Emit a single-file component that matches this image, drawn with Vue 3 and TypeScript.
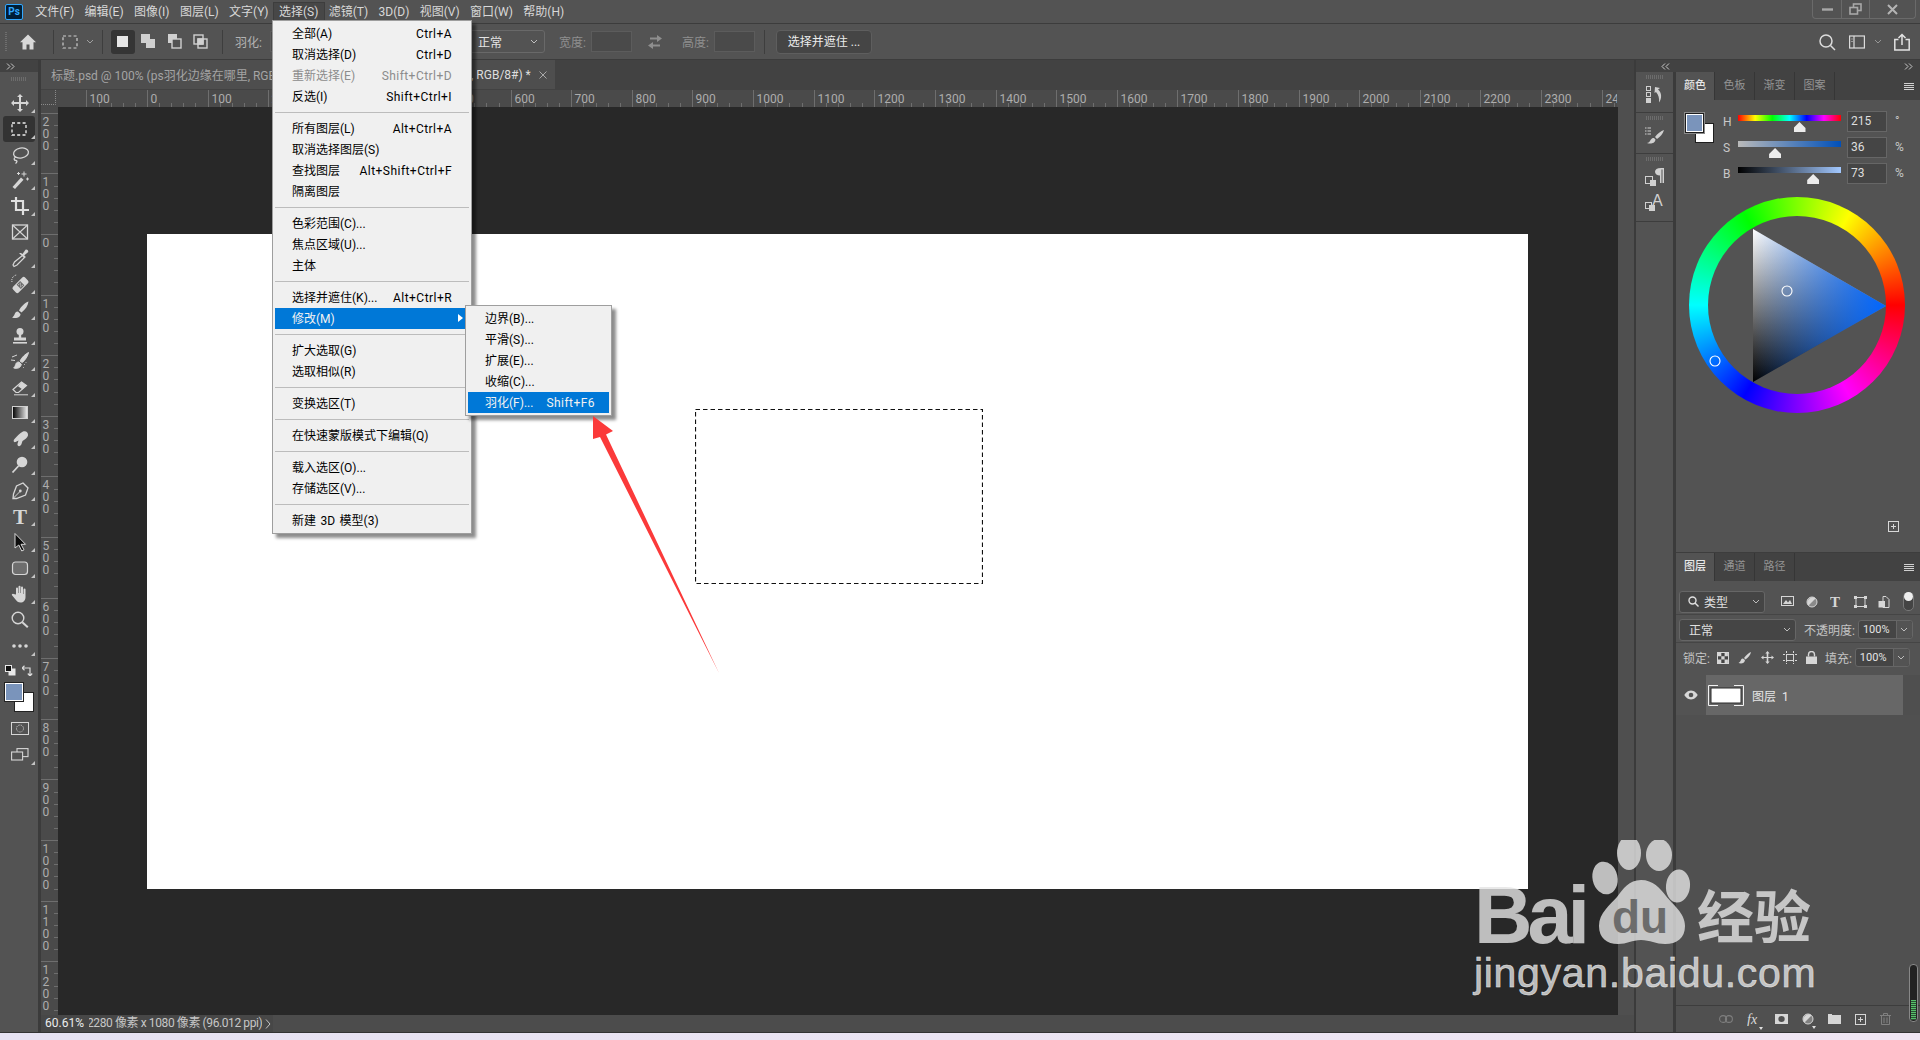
<template>
  <div class="ps">
    <header class="titlebar">
      <div class="logo">Ps</div>
      <nav class="menubar">
        <span
          v-for="item in menuBar"
          :key="item"
          class="menubar-item"
          :class="{ 'menubar-item--open': item === '选择(S)' }"
        >{{ item }}</span>
      </nav>
      <div class="window-controls">
        <span class="win-btn win-btn--min"><svg width="11" height="3"><rect width="11" height="2.4" y="0.3" fill="#a8a8a8" /></svg></span>
        <span class="win-btn win-btn--max">
          <svg width="13" height="12" fill="none" stroke="#a8a8a8" stroke-width="1.6"><rect x="4.5" y="1" width="7.5" height="6.5" /><rect x="1" y="4.5" width="7.5" height="6.5" fill="#535353" /></svg>
        </span>
        <span class="win-btn win-btn--close">
          <svg width="11" height="11" stroke="#b4b4b4" stroke-width="2"><path d="M1 1l9 9M10 1l-9 9" /></svg>
        </span>
      </div>
    </header>

    <section class="optionsbar">
      <span class="grip-v"></span>
      <svg class="o-home" width="18" height="18" viewBox="0 0 18 18"><path fill="#d8d8d8" d="M9 1.500L1 9.200h2.500V16.500h4v-5h3v5h4V9.200H17z" /></svg>
      <span class="o-sep o-sep--home"></span>
      <svg class="o-marquee" width="16" height="14"><rect x="1" y="1" width="14" height="12" fill="none" stroke="#cfcfcf" stroke-width="1.200" stroke-dasharray="3 2.300" /></svg>
      <svg class="o-chev" width="8" height="6"><path d="M1 1l3 3 3-3" fill="none" stroke="#a0a0a0" /></svg>
      <span class="o-sep o-sep--marquee"></span>
      <div class="mode-group">
        <span class="mode-btn mode-btn--on"><svg width="12" height="12"><rect width="11" height="11" fill="#e6e6e6" /></svg></span>
        <span class="mode-btn"><svg width="16" height="16"><rect width="9" height="9" fill="#d0d0d0" /><rect x="5" y="5" width="9" height="9" fill="#d0d0d0" /></svg></span>
        <span class="mode-btn"><svg width="16" height="16"><rect x="1" width="9" height="9" fill="#d0d0d0" /><rect x="5" y="5" width="9" height="9" fill="#535353" stroke="#d0d0d0" stroke-width="1.400" /></svg></span>
        <span class="mode-btn"><svg width="16" height="16" fill="none" stroke="#d0d0d0" stroke-width="1.400"><rect x="1" y="1" width="9" height="9" /><rect x="5" y="5" width="9" height="9" /><rect x="5" y="5" width="5" height="5" fill="#d0d0d0" /></svg></span>
      </div>
      <span class="o-sep o-sep--mode"></span>
      <span class="o-label o-label--feather">羽化:</span>
      <span class="o-input o-input--feather"></span>
      <span class="o-select">正常<svg width="8" height="6"><path d="M1 1l3 3 3-3" fill="none" stroke="#c0c0c0" /></svg></span>
      <span class="o-label o-label--width">宽度:</span>
      <span class="o-input o-input--size"></span>
      <svg class="o-swap" width="16" height="14" viewBox="0 0 16 14"><path fill="#8e8e8e" d="M10 0l5 3.500-5 3.500V4.500H3v-2h7zM6 7v2.500h7v2H6V14L1 10.500z" /></svg>
      <span class="o-label o-label--height">高度:</span>
      <span class="o-input o-input--size"></span>
      <span class="o-sep o-sep--size"></span>
      <span class="o-button">选择并遮住 ...</span>
      <div class="o-right">
        <svg width="18" height="18" viewBox="0 0 18 18" fill="none" stroke="#dcdcdc" stroke-width="1.500"><circle cx="8" cy="8" r="6" /><path d="M12.500 12.500l4.500 4.500" /></svg>
        <svg class="o-workspace" width="16" height="14" fill="none" stroke="#dcdcdc" stroke-width="1.200"><rect x="0.600" y="1" width="14.800" height="12" /><path d="M5 1v12" /><path d="M2.500 4h1M2.500 6.500h1" /></svg>
        <svg class="o-chev2" width="8" height="6"><path d="M1 1l3 3 3-3" fill="none" stroke="#969696" /></svg>
        <svg class="o-share" width="16" height="18" viewBox="0 0 16 18" fill="none" stroke="#e2e2e2" stroke-width="1.500"><path d="M4.500 6.500H.8v10.500h14.400V6.500h-3.700M8 12V1.500M4.500 5L8 1.500 11.500 5" /></svg>
      </div>
    </section>

    <div class="workspace">
      <aside class="toolbar">
        <div class="toolbar-head">
          <svg width="9" height="7" fill="none" stroke="#c8c8c8"><path d="M1 .5L4 3.500 1 6.500M5 .5L8 3.500 5 6.500" /></svg>
        </div>
        <div class="toolbar-grip"></div>
        <div
          v-for="tool in tools"
          :key="tool.name"
          class="tool"
          :class="{ 'tool--on': tool.on, 'tool--sub': tool.sub }"
          :title="tool.name"
        >
          <svg width="20" height="20" viewBox="0 0 20 20" v-html="tool.body"></svg>
        </div>
        <div class="color-reset">
          <svg width="11" height="11"><rect x="3.500" y="3.500" width="7" height="7" fill="#e8e8e8" /><rect x="0.500" y="0.500" width="6" height="6" fill="#111" stroke="#e8e8e8" /></svg>
          <svg width="11" height="11" viewBox="0 0 11 11" fill="none" stroke="#dcdcdc" stroke-width="1.200"><path d="M0 3h8v8M2.500 .8L0 3l2.500 2.200M5.800 8.500L8 11l2.200-2.500" /></svg>
        </div>
        <div class="color-swatches">
          <span class="swatch swatch--bg"></span>
          <span class="swatch swatch--fg"></span>
        </div>
        <div class="tool tool--mask">
          <svg width="18" height="14" fill="none" stroke="#d6d6d6"><rect x=".5" y=".5" width="17" height="12" /><circle cx="9" cy="6.500" r="3.500" stroke-dasharray="1.200 1.200" /></svg>
        </div>
        <div class="tool tool--sub tool--screen">
          <svg width="18" height="14" fill="none" stroke="#d6d6d6" stroke-width="1.100"><rect x="6" y=".6" width="11" height="8" /><rect x=".6" y="4" width="11" height="8" fill="#535353" /></svg>
        </div>
      </aside>

      <main class="doc">
        <div class="tabs">
          <div class="tab">
            <span class="tab-left">标题.psd @ 100% (ps羽化边缘在哪里, RGB/8#)</span>
            <span class="tab-right">, RGB/8#) *</span>
            <svg class="tab-close" width="8" height="8" stroke="#a8a8a8"><path d="M.5 .5l7 7M7.500 .5l-7 7" /></svg>
          </div>
        </div>
        <div class="ruler-row">
          <svg class="ruler-corner" width="17" height="17" stroke="#8a8a8a" stroke-dasharray="1 1"><path d="M0 14.500h14.500V0" fill="none" /></svg>
          <svg class="ruler-h" width="1559" height="17" viewBox="58 90 1559 17">
            <g v-for="t in hTicks" :key="t.x">
              <line :x1="t.x" :x2="t.x" :y1="t.major ? 90 : 103" y2="107" stroke="#6e6e6e" />
              <text v-if="t.major" :x="t.x + 3" y="103" class="ruler-text">{{ t.label }}</text>
            </g>
          </svg>
          <div class="scroll-corner"></div>
        </div>
        <div class="canvas-row">
          <svg class="ruler-v" width="17" height="908" viewBox="41 107 17 908">
            <g v-for="t in vTicks" :key="t.y">
              <line :x1="t.major ? 41 : 54" x2="58" :y1="t.y" :y2="t.y" stroke="#6e6e6e" />
              <template v-if="t.major">
                <text
                  v-for="(digit, i) in t.digits"
                  :key="i"
                  x="42.500"
                  :y="t.y + 12 + i * 12"
                  class="ruler-text"
                >{{ digit }}</text>
              </template>
            </g>
          </svg>
          <div class="canvas">
            <div class="page">
              <svg class="marquee" width="288" height="175" fill="none" stroke="#111" stroke-width="1.200" stroke-dasharray="4.500 3">
                <rect x=".5" y=".5" width="287" height="174" />
              </svg>
            </div>
          </div>
          <div class="scroll-v"></div>
        </div>
        <footer class="status">
          <span class="status-zoom">60.61%</span>
          <span class="status-info"><span class="status-clip"><span class="status-text">2280 像素 x 1080 像素 (96.012 ppi)</span></span><svg width="6" height="10" fill="none" stroke="#c4c4c4"><path d="M1 .5L5 5 1 9.500" /></svg></span>
        </footer>
      </main>

      <aside class="dock">
        <div class="dock-head">
          <svg width="9" height="7" fill="none" stroke="#c8c8c8"><path d="M4 .5L1 3.500 4 6.500M8 .5L5 3.500 8 6.500" /></svg>
          <svg class="dock-head-right" width="9" height="7" fill="none" stroke="#c8c8c8"><path d="M1 .5L4 3.500 1 6.500M5 .5L8 3.500 5 6.500" /></svg>
        </div>
        <div class="dock-body">
          <div class="dock-strip">
            <div class="strip-cell">
              <span class="strip-grip"></span>
              <svg width="20" height="20" viewBox="0 0 20 20"><g fill="none" stroke="#d0d0d0"><rect x="1.500" y="1.500" width="4" height="4" /><rect x="1.500" y="7.500" width="4" height="4" /></g><rect x="1" y="13" width="5" height="5" fill="#d0d0d0" /><path d="M10 2l5 1-2 1.500c4 3 4 9 1 13 .5-4-.5-8-3-10.500L9.500 8z" fill="#d0d0d0" /></svg>
            </div>
            <div class="strip-cell">
              <span class="strip-grip"></span>
              <svg width="22" height="20" viewBox="0 0 22 20"><path d="M1 2h6M1 5h6M1 8h6" stroke="#d0d0d0" stroke-dasharray="1.500 1 4" /><path d="M20 4c-3 1-7 4-9 7l2 2c3-2 6-5 7-9zM10 12c-3 0-3 2-4 3-.500 1-2 2-3 2 3 1 8 1 8.500-3.500z" fill="#d0d0d0" /></svg>
            </div>
            <div class="strip-cell strip-cell--para">
              <span class="strip-grip"></span>
              <svg width="20" height="24" viewBox="0 0 20 24"><rect x=".5" y="9.500" width="7" height="7" fill="none" stroke="#d0d0d0" /><rect x="5" y="13" width="6" height="6" fill="#d0d0d0" /><path d="M16 1h3v15h-1.500V2.500h-1V16H15V8.500c-3 0-5-1.500-5-3.700S12 1 16 1z" fill="#d0d0d0" /></svg>
              <svg class="strip-a" width="20" height="22" viewBox="0 0 20 22"><rect x=".5" y="11.500" width="6" height="6" fill="none" stroke="#d0d0d0" /><rect x="4" y="14" width="6" height="6" fill="#d0d0d0" /><text x="7" y="15" class="strip-a-text">A</text></svg>
            </div>
          </div>
          <div class="panels">
            <section class="panel panel--color">
              <div class="panel-tabs">
                <span
                  v-for="(name, i) in colorTabs"
                  :key="name"
                  class="panel-tab"
                  :class="{ 'panel-tab--on': i === 0 }"
                >{{ name }}</span>
                <span class="panel-menu"></span>
              </div>
              <div class="color-head">
                <div class="panel-swatches">
                  <span class="pswatch pswatch--bg"></span>
                  <span class="pswatch pswatch--fg"></span>
                </div>
                <div class="sliders">
                  <div v-for="s in sliders" :key="s.name" class="slider-row">
                    <span class="slider-name">{{ s.name }}</span>
                    <div class="slider-track" :class="s.cls">
                      <span class="slider-thumb" :style="{ left: s.pos + '%' }"></span>
                    </div>
                    <span class="slider-value">{{ s.value }}</span>
                    <span class="slider-unit">{{ s.unit }}</span>
                  </div>
                </div>
              </div>
              <div class="wheel">
                <svg class="wheel-tri" width="216" height="216" viewBox="1689 197 216 216">
                  <defs>
                    <linearGradient id="triV" x1="0" y1="0" x2="0" y2="1">
                      <stop offset="0" stop-color="#fff" />
                      <stop offset="1" stop-color="#000" />
                    </linearGradient>
                    <linearGradient id="triH" x1="0" y1="0" x2="1" y2="0">
                      <stop offset="0" stop-color="#0066ff" stop-opacity="0" />
                      <stop offset="1" stop-color="#0066ff" />
                    </linearGradient>
                  </defs>
                  <polygon points="1753,229 1886,306 1753,382" fill="url(#triV)" />
                  <polygon points="1753,229 1886,306 1753,382" fill="url(#triH)" />
                  <circle cx="1787" cy="291" r="5" fill="none" stroke="#fff" stroke-width="1.100" />
                  <circle cx="1715" cy="361" r="5" fill="none" stroke="#fff" stroke-width="1.100" />
                </svg>
              </div>
              <svg class="panel-add" width="11" height="11" fill="none" stroke="#d8d8d8"><rect x=".5" y=".5" width="10" height="10" /><path d="M3 5.500h5M5.500 3v5" /></svg>
            </section>

            <section class="panel panel--layers">
              <div class="panel-tabs">
                <span
                  v-for="(name, i) in layerTabs"
                  :key="name"
                  class="panel-tab"
                  :class="{ 'panel-tab--on': i === 0 }"
                >{{ name }}</span>
                <span class="panel-menu"></span>
              </div>
              <div class="layer-filter">
                <span class="field field--kind">
                  <svg width="11" height="11" fill="none" stroke="#e0e0e0" stroke-width="1.400"><circle cx="4.500" cy="4.500" r="3.500" /><path d="M7 7l3.500 3.500" /></svg>
                  类型
                  <svg class="field-chev" width="8" height="6"><path d="M1 1l3 3 3-3" fill="none" stroke="#bdbdbd" /></svg>
                </span>
                <svg class="lf-icon" width="14" height="12" fill="none" stroke="#d6d6d6"><rect x=".5" y=".5" width="12" height="9" /><path d="M2 8l3-4 2 2.500L9 4l2 4z" fill="#d6d6d6" stroke="none" /></svg>
                <svg class="lf-icon" width="13" height="12"><circle cx="6" cy="6" r="5" fill="#8a8a8a" stroke="#d6d6d6" /><path d="M2.500 9.500l7-7A5 5 0 002.500 9.500z" fill="#d6d6d6" /></svg>
                <svg class="lf-icon" width="13" height="12"><text x="0" y="11" class="lf-t">T</text></svg>
                <svg class="lf-icon" width="13" height="12" fill="#d6d6d6"><rect x="2" y="1.500" width="9" height="9" fill="none" stroke="#d6d6d6" /><rect x="0" y="0" width="3" height="3" /><rect x="10" y="0" width="3" height="3" /><rect x="0" y="9" width="3" height="3" /><rect x="10" y="9" width="3" height="3" /></svg>
                <svg class="lf-icon" width="12" height="12" fill="#d6d6d6"><path d="M5 .5h3l3 3v8H5z" fill="none" stroke="#d6d6d6" /><rect x="0.500" y="5" width="6.500" height="6.500" /></svg>
                <span class="lf-toggle"></span>
              </div>
              <div class="layer-blend">
                <span class="field field--blend">正常
                  <svg class="field-chev" width="8" height="6"><path d="M1 1l3 3 3-3" fill="none" stroke="#bdbdbd" /></svg>
                </span>
                <span class="lb-label lb-label--opacity">不透明度:</span>
                <span class="percent">100%<i><svg width="8" height="6"><path d="M1 1l3 3 3-3" fill="none" stroke="#bdbdbd" /></svg></i></span>
              </div>
              <div class="layer-lock">
                <span class="lb-label">锁定:</span>
                <svg class="lock-icon lock-icon--first" width="12" height="12"><rect x=".5" y=".5" width="11" height="11" fill="#444" stroke="#d6d6d6" /><path d="M1 1h3.300v3.300H1zM7.600 1h3.300v3.300H7.600zM4.300 4.300h3.300v3.300H4.300zM1 7.600h3.300v3.300H1zM7.600 7.600h3.300v3.300H7.600z" fill="#d6d6d6" /></svg>
                <svg class="lock-icon" width="14" height="14" viewBox="0 0 14 14"><path fill="#d6d6d6" d="M13 1c-2 .7-5 3-7 6l1.500 1.500C10 7 12.500 4 13 1zM5 7.500C3 7.500 3 9 2.500 10c-.3.8-1 1.500-2 2 2.500 1 6 .7 6.500-3z" /></svg>
                <svg class="lock-icon" width="13" height="13" viewBox="0 0 13 13"><path fill="#d6d6d6" d="M6.500 0l2.200 2.500H7.300V6h3.200V4.500L13 6.500l-2.500 2V7H7.300v3.500h1.400L6.500 13l-2.200-2.500h1.400V7H2.500v1.500L0 6.500l2.500-2V6h3.200V2.500H4.300z" /></svg>
                <svg class="lock-icon" width="14" height="13" fill="none" stroke="#d6d6d6"><path d="M3.500 0v13M10.500 0v13M0 3.500h14M0 9.500h14" stroke-dasharray="2 1" /><path d="M3.500 3.500h7v6h-7z" stroke-dasharray="none" /></svg>
                <svg class="lock-icon" width="11" height="13" viewBox="0 0 11 13"><rect y="5.500" width="11" height="7.500" fill="#d6d6d6" /><path d="M2.500 5.500V3.500a3 3 0 016 0v2" fill="none" stroke="#d6d6d6" stroke-width="1.400" /></svg>
                <span class="lb-label lb-label--fill">填充:</span>
                <span class="percent">100%<i><svg width="8" height="6"><path d="M1 1l3 3 3-3" fill="none" stroke="#bdbdbd" /></svg></i></span>
              </div>
              <div class="layer-row">
                <span class="layer-eye">
                  <svg width="14" height="10" viewBox="0 0 14 10"><path d="M7 .5C3.500 .5 1 3.500 .3 5 1 6.500 3.500 9.500 7 9.500S13 6.500 13.700 5C13 3.500 10.500 .5 7 .5z" fill="#d8d8d8" /><circle cx="7" cy="5" r="2.300" fill="#535353" /></svg>
                </span>
                <div class="layer-item">
                  <svg class="layer-thumb" width="36" height="21" viewBox="0 0 36 21">
                    <rect x="3" y="3" width="30" height="15" fill="#fff" stroke="#2a2a2a" />
                    <path d="M10 .5H.5v20H10M26 .5h9.500v20H26" fill="none" stroke="#f2f2f2" />
                  </svg>
                  <span class="layer-name">图层 1</span>
                </div>
                <span class="layer-gutter"></span>
              </div>
              <div class="layer-rest"></div>
              <div class="layer-foot">
                <svg width="14" height="8" fill="none" stroke="#7e7e7e" stroke-width="1.100"><rect x=".6" y=".6" width="7" height="6.800" rx="3.400" /><rect x="6.400" y=".6" width="7" height="6.800" rx="3.400" /></svg>
                <span class="foot-tri"><svg width="14" height="14"><text x="0" y="12" class="foot-fx">fx</text></svg></span>
                <svg width="13" height="10"><rect width="13" height="10" fill="#d6d6d6" /><ellipse cx="6.500" cy="5" rx="3.200" ry="3" fill="#505050" /></svg>
                <span class="foot-tri"><svg width="12" height="12"><circle cx="6" cy="6" r="5" fill="#808080" stroke="#d6d6d6" /><path d="M2.500 9.500l7-7A5 5 0 002.500 9.500z" fill="#d6d6d6" /></svg></span>
                <svg width="13" height="10"><path d="M0 0h4v1h9v9H0z" fill="#d6d6d6" /></svg>
                <svg width="11" height="11" fill="none" stroke="#d6d6d6"><rect x=".5" y=".5" width="10" height="10" /><path d="M3 5.500h5M5.500 3v5" /></svg>
                <svg width="11" height="12" fill="none" stroke="#808080"><path d="M0 2.500h11M3.500 2V.5h4V2M1.500 3v8.500h8V3M4 4.500v5.500M7 4.500v5.500" /></svg>
              </div>
              <div class="gauge"><span class="gauge-level"></span></div>
            </section>
          </div>
        </div>
      </aside>
    </div>

    <div class="bottom-strip"></div>

    <!-- dropdown open on top of everything -->
    <div class="menu menu--select">
      <template v-for="(group, g) in selectMenu" :key="g">
        <div v-if="g > 0" class="menu-sep"></div>
        <div
          v-for="row in group"
          :key="row.label"
          class="menu-row"
          :class="{ 'menu-row--off': row.off, 'menu-row--on': row.on }"
        >
          <span>{{ row.label }}</span>
          <span class="menu-shortcut">{{ row.keys }}</span>
        </div>
      </template>
      <span class="menu-caret"></span>
    </div>
    <div class="menu menu--modify">
      <div
        v-for="row in modifyMenu"
        :key="row.label"
        class="menu-row"
        :class="{ 'menu-row--on': row.on }"
      >
        <span>{{ row.label }}</span>
        <span class="menu-keys menu-shortcut">{{ row.keys }}</span>
      </div>
    </div>

    <svg class="arrow" width="134" height="264" viewBox="590 412 134 264">
      <polygon points="593,416 613,431 606,434.500 719,673 600,437 593,439" fill="#fb3a3a" />
    </svg>

    <svg class="watermark" width="370" height="170" viewBox="1460 840 370 170">
      <g fill="#e4e4e4" fill-opacity="0.8">
        <text x="1474" y="943" class="wm-bai">Bai</text>
        <ellipse cx="1629" cy="853" rx="12" ry="17" />
        <ellipse cx="1659" cy="855" rx="13" ry="16" />
        <ellipse cx="1605" cy="878" rx="12.500" ry="16.500" transform="rotate(-12 1605 878)" />
        <ellipse cx="1678" cy="886" rx="12" ry="16.500" transform="rotate(6 1678 886)" />
        <path d="M1641 880c-12 0-18 9-24 17-7 8-18 16-18 29 0 12 8 18 19 18 9 0 14-4 23-4s15 4 24 4c12 0 20-6 20-18 0-13-12-21-19-30-6-8-13-16-25-16z" />
        <text x="1697" y="938" class="wm-cjk">经验</text>
        <text x="1474" y="987" class="wm-url">jingyan.baidu.com</text>
      </g>
      <text x="1612" y="933" class="wm-du">du</text>
    </svg>
  </div>
</template>

<script setup lang="ts">
interface Tool {
  name: string
  body: string
  sub?: boolean
  on?: boolean
}

interface MenuRow {
  label: string
  keys?: string
  off?: boolean
  on?: boolean
}

const C = '#d6d6d6'

const menuBar = [
  '文件(F)', '编辑(E)', '图像(I)', '图层(L)', '文字(Y)', '选择(S)',
  '滤镜(T)', '3D(D)', '视图(V)', '窗口(W)', '帮助(H)',
]

// icons are plain markup since there are so many of them
const tools: Tool[] = [
  { name: 'move', sub: true, body: `<path fill="${C}" d="M10 1l3 3h-2v5h5V7l3 3-3 3v-2h-5v5h2l-3 3-3-3h2v-5H4v2l-3-3 3-3v2h5V4H7z"/>` },
  { name: 'marquee', sub: true, on: true, body: `<rect x="3" y="4" width="14" height="12" fill="none" stroke="#eee" stroke-width="1.300" stroke-dasharray="3 2.300"/>` },
  { name: 'lasso', sub: true, body: `<ellipse cx="11" cy="8" rx="7.500" ry="5" fill="none" stroke="${C}" stroke-width="1.300" transform="rotate(-10 11 8)"/><path d="M6 12c-3 1-2 3.500 0 3.500 1.500 0 1 2-.5 3" fill="none" stroke="${C}" stroke-width="1.300"/>` },
  { name: 'wand', sub: true, body: `<path d="M2.500 17l8.500-9.500 2.500 2.200L5 19z" fill="${C}"/><path d="M14 1.500v5M11.500 4h5M8.500 2v3M7 3.500h3M17.500 7.500v3M16 9h3" stroke="${C}"/>` },
  { name: 'crop', sub: true, body: `<path d="M6 1v13h13M1 5h12v14" fill="none" stroke="#e0e0e0" stroke-width="2.200"/>` },
  { name: 'frame', body: `<rect x="2.500" y="3" width="15" height="14" fill="none" stroke="${C}" stroke-width="1.300"/><path d="M2.500 3l15 14M17.500 3l-15 14" stroke="${C}" stroke-width="1.100"/>` },
  { name: 'eyedropper', sub: true, body: `<path d="M13 7l2 2-8 8-3 1.500L3 17l1.500-3z" fill="none" stroke="${C}" stroke-width="1.200"/><path d="M11 5l1.500 1 3-4.200c1.300-1 3.500 1 2.500 2.500L14 7.500l1 1.500-1 1-5-5z" fill="${C}"/>` },
  { name: 'heal', sub: true, body: `<g transform="rotate(-45 10.500 11)"><rect x="2" y="7" width="17" height="8" rx="2" fill="${C}"/><rect x="8" y="8" width="5" height="6" fill="#6a6a6a"/><path d="M9 9h1v1H9zM11 9h1v1h-1zM10 10.500h1v1h-1zM9 12h1v1H9zM11 12h1v1h-1z" fill="${C}"/></g><path d="M2 8c-1-4 2-7 5-7" fill="none" stroke="${C}" stroke-dasharray="1 1"/>` },
  { name: 'brush', sub: true, body: `<path d="M18.500 1.500c-3.500 1-7.500 5-9.500 9l2.500 2c4-3 6.500-7 7-11zM8 11.500c-2.500 0-3 1.500-3.500 3-.3 1-1.300 2.300-2.500 3 3.500 1.300 8.500.5 8.500-3.500z" fill="${C}"/>` },
  { name: 'stamp', sub: true, body: `<circle cx="10" cy="5.500" r="3.500" fill="${C}"/><path d="M8.800 8h2.400v3.500H16V14.500H4V11.500h4.800z" fill="${C}"/><rect x="3" y="16" width="14" height="1.600" fill="${C}"/>` },
  { name: 'mixer', sub: true, body: `<path d="M18.500 1.500c-3 1.500-6.500 4.500-8.500 8.500l2.300 1.500c3-2.500 5.500-6.500 6.200-10zM9 11c-2.300 0-3 1.300-3.300 2.500-.3 1.300-1 2.500-2 3.500 3 .8 7.500.3 7.500-4zM2 6l5-2M1 9l4 .5" fill="${C}" stroke="${C}"/><path d="M14 13l1 1M15.500 11l1 1M13 16l1 1" stroke="${C}" stroke-dasharray="1 1"/>` },
  { name: 'eraser', sub: true, body: `<path d="M3 12.500L11.500 5l5 3.500-8 7H6z" fill="none" stroke="${C}" stroke-width="1.200"/><path d="M8 9.300L11.500 5l5 3.500-4 4z" fill="${C}"/><path d="M4 17.800h14" stroke="${C}"/>` },
  { name: 'gradient', sub: true, body: `<defs><linearGradient id="toolGrad"><stop offset="0" stop-color="#000"/><stop offset="1" stop-color="#eee"/></linearGradient></defs><rect x="2.500" y="3.500" width="15" height="12" fill="url(#toolGrad)" stroke="#d0d0d0"/>` },
  { name: 'smudge', sub: true, body: `<path d="M13 2.500c3-1 5.500 1 5 4-.5 2-3 4-5.500 5.500l-1 3c-1 3-4.500 2.800-4-.2l1-3.300-3 1.500c-2 .7-2.500-1.500-1-3 3-3 5-6 8.500-7.500z" fill="${C}"/>` },
  { name: 'dodge', sub: true, body: `<circle cx="12" cy="7" r="5.300" fill="${C}"/><path d="M8.500 11L2.500 17.500" stroke="${C}" stroke-width="1.800"/>` },
  { name: 'pen', sub: true, body: `<path d="M13 2l5 5-2.500 7-9 3.500H3L3.500 13 6.500 5z" fill="none" stroke="${C}" stroke-width="1.300"/><path d="M3.500 17l6-6" stroke="${C}"/><circle cx="10.300" cy="10" r="1.400" fill="${C}"/>` },
  { name: 'type', sub: true, body: `<text x="3" y="17.500" font-family="Liberation Serif" font-weight="700" font-size="21" fill="${C}">T</text>` },
  { name: 'path select', sub: true, body: `<path d="M5 1.500v14.500l3.800-3 3 6 2.200-1.200-3-5.500h4.500z" fill="#0c0c0c" stroke="#d8d8d8"/>` },
  { name: 'shape', sub: true, body: `<rect x="2.500" y="4" width="15" height="12.500" rx="3" fill="#6e6e6e" stroke="${C}" stroke-width="1.200"/>` },
  { name: 'hand', sub: true, body: `<path fill="${C}" d="M6 10.500V4.500a1 1 0 012 0V9h.5V2.800a1 1 0 012 0V9h.5V3.500a1 1 0 012 0V10h.5V5.500a1 1 0 012 0V13c0 3.500-2 5.500-5 5.500-2.500 0-3.500-1-5-3L2 11.300c-.6-1 .6-2.200 1.500-1.400z"/>` },
  { name: 'zoom', body: `<circle cx="8" cy="8" r="5.800" fill="none" stroke="${C}" stroke-width="1.400"/><path d="M12.300 12.300l5.500 5" stroke="${C}" stroke-width="2"/>` },
  { name: 'more', sub: true, body: `<circle cx="4" cy="10" r="1.800" fill="${C}"/><circle cx="10" cy="10" r="1.800" fill="${C}"/><circle cx="16" cy="10" r="1.800" fill="${C}"/>` },
]

const selectMenu: MenuRow[][] = [
  [
    { label: '全部(A)', keys: 'Ctrl+A' },
    { label: '取消选择(D)', keys: 'Ctrl+D' },
    { label: '重新选择(E)', keys: 'Shift+Ctrl+D', off: true },
    { label: '反选(I)', keys: 'Shift+Ctrl+I' },
  ],
  [
    { label: '所有图层(L)', keys: 'Alt+Ctrl+A' },
    { label: '取消选择图层(S)' },
    { label: '查找图层', keys: 'Alt+Shift+Ctrl+F' },
    { label: '隔离图层' },
  ],
  [
    { label: '色彩范围(C)...' },
    { label: '焦点区域(U)...' },
    { label: '主体' },
  ],
  [
    { label: '选择并遮住(K)...', keys: 'Alt+Ctrl+R' },
    { label: '修改(M)', on: true },
  ],
  [
    { label: '扩大选取(G)' },
    { label: '选取相似(R)' },
  ],
  [{ label: '变换选区(T)' }],
  [{ label: '在快速蒙版模式下编辑(Q)' }],
  [
    { label: '载入选区(O)...' },
    { label: '存储选区(V)...' },
  ],
  [{ label: '新建 3D 模型(3)' }],
]

const modifyMenu: MenuRow[] = [
  { label: '边界(B)...' },
  { label: '平滑(S)...' },
  { label: '扩展(E)...' },
  { label: '收缩(C)...' },
  { label: '羽化(F)...', keys: 'Shift+F6', on: true },
]

const colorTabs = ['颜色', '色板', '渐变', '图案']
const layerTabs = ['图层', '通道', '路径']

const sliders = [
  { name: 'H', cls: 'track-h', value: '215', unit: '°', pos: (215 / 360) * 100 },
  { name: 'S', cls: 'track-s', value: '36', unit: '%', pos: 36 },
  { name: 'B', cls: 'track-b', value: '73', unit: '%', pos: 73 },
]

// 60.61% zoom: document pixel 0 sits at x=147 / y=234
const PX_PER_UNIT = 0.6061
const ORIGIN_X = 147
const ORIGIN_Y = 234

const hTicks: { x: number; major: boolean; label: string }[] = []
for (let v = -100; v <= 2500; v += 20) {
  const major = v % 100 === 0
  hTicks.push({
    x: Math.round(ORIGIN_X + v * PX_PER_UNIT) + 0.5,
    major,
    label: String(Math.abs(v)),
  })
}

const vTicks: { y: number; major: boolean; digits: string[] }[] = []
for (let v = -200; v <= 1300; v += 20) {
  const major = v % 100 === 0
  vTicks.push({
    y: Math.round(ORIGIN_Y + v * PX_PER_UNIT) + 0.5,
    major,
    digits: String(Math.abs(v)).split(''),
  })
}
</script>

<style scoped>
.ps {
  position: relative;
  display: flex;
  flex-direction: column;
  width: 1920px;
  height: 1040px;
  overflow: hidden;
  background: #535353;
  color: #d8d8d8;
  font-family: Roboto, "Noto Sans CJK SC", sans-serif;
  font-size: 12px;
}

/* title bar */
.titlebar {
  display: flex;
  align-items: flex-start;
  flex: none;
  box-sizing: border-box;
  height: 24px;
  border-bottom: 1px solid #3c3c3c;
  background: #535353;
}

.logo {
  width: 16px;
  height: 14px;
  margin: 4px 0 0 5px;
  border: 1px solid #31a8ff;
  border-radius: 2px;
  background: #001e36;
  color: #31a8ff;
  font-size: 10px;
  font-weight: 700;
  line-height: 14px;
  text-align: center;
}

.menubar {
  display: flex;
  margin-left: 7px;
}

.menubar-item {
  height: 21px;
  margin-top: 3px;
  padding: 0 5.200px;
  line-height: 18px;
  white-space: nowrap;
}

.menubar-item--open {
  background: #474747;
  outline: 1px solid #3d3d3d;
}

.window-controls {
  display: flex;
  width: 102px;
  height: 18px;
  margin-left: auto;
  margin-right: 4px;
  border: 1px solid #6a6a6a;
  border-top: 0;
  border-radius: 0 0 4px 4px;
}

.win-btn {
  display: flex;
  align-items: center;
  justify-content: center;
  height: 100%;
  border-right: 1px solid #6a6a6a;
}

.win-btn--min { width: 28px; }
.win-btn--max { width: 27px; }
.win-btn--close { flex: 1; border-right: 0; }

/* options bar */
.optionsbar {
  display: flex;
  align-items: center;
  flex: none;
  box-sizing: border-box;
  height: 36px;
  border-bottom: 1px solid #3c3c3c;
  background: #535353;
}

.grip-v {
  width: 2px;
  height: 20px;
  margin-left: 5px;
  background: repeating-linear-gradient(#6e6e6e 0 1px, transparent 1px 2px);
}

.o-home { margin-left: 12px; }
.o-marquee { margin-left: 8px; }
.o-chev { margin-left: 8px; }

.o-sep {
  width: 1px;
  height: 24px;
  background: #3e3e3e;
}

.o-sep--home { margin-left: 16px; }
.o-sep--marquee { margin-left: 8px; }
.o-sep--mode { margin-left: 9px; }
.o-sep--size { margin-left: 9px; }

.mode-group {
  display: flex;
  gap: 2px;
  margin-left: 8px;
}

.mode-btn {
  display: flex;
  align-items: center;
  justify-content: center;
  width: 24px;
  height: 24px;
}

.mode-btn--on {
  border-radius: 3px;
  background: #353535;
}

.o-label {
  width: 28px;
  color: #8f8f8f;
  white-space: nowrap;
}

.o-label--feather {
  margin-left: 12px;
  width: 27px;
  color: #b4b4b4;
}

.o-label--width { margin-left: 14px; }
.o-label--height { margin-left: 19px; }

.o-input {
  box-sizing: border-box;
  height: 21px;
  border: 1px solid #5c5c5c;
  background: #4a4a4a;
}

.o-input--feather { width: 100px; margin-left: 8px; }
.o-input--size { width: 41px; margin-left: 4px; }

.o-select {
  display: flex;
  align-items: center;
  justify-content: space-between;
  box-sizing: border-box;
  width: 175px;
  height: 23px;
  margin-left: 0;
  padding: 0 6px 0 107px;
  border: 1px solid #696969;
  border-radius: 3px;
  background: #535353;
  color: #e4e4e4;
}

.o-swap { margin-left: 15px; }

.o-button {
  box-sizing: border-box;
  width: 96px;
  height: 24px;
  margin-left: 11px;
  border: 1px solid #5e5e5e;
  border-radius: 4px;
  background: #454545;
  color: #ececec;
  line-height: 22px;
  text-align: center;
  white-space: nowrap;
}

.o-right {
  display: flex;
  align-items: center;
  margin-left: auto;
  margin-right: 10px;
}

.o-workspace { margin-left: 13px; }
.o-chev2 { margin-left: 9px; }
.o-share { margin-left: 12px; }

/* main area */
.workspace {
  display: flex;
  flex: 1;
  min-height: 0;
}

.toolbar {
  flex: none;
  width: 38px;
  border-right: 3px solid #3b3b3b;
  background: #535353;
}

.toolbar-head {
  display: flex;
  align-items: center;
  height: 12px;
  padding-left: 6px;
  background: #424242;
}

.toolbar-grip {
  height: 18px;
  background: repeating-linear-gradient(90deg, #6c6c6c 0 1px, transparent 1px 2px) center 5px / 16px 4px no-repeat;
}

.tool {
  position: relative;
  display: flex;
  align-items: center;
  justify-content: center;
  box-sizing: border-box;
  height: 25.850px;
  padding-left: 2px;
}

.tool--on {
  margin: 0 3px;
  padding-left: 0;
  border-radius: 3px;
  background: #333;
}

.tool--sub::after {
  content: "";
  position: absolute;
  right: 3px;
  bottom: 3px;
  border-style: solid;
  border-width: 0 0 4px 4px;
  border-color: transparent transparent #c4c4c4;
}

.tool--on::after { right: 0; }

.color-reset {
  display: flex;
  justify-content: space-between;
  height: 12px;
  margin-top: 6px;
  padding: 0 5px;
}

.color-swatches {
  position: relative;
  height: 30px;
  margin: 5px 0 0 4px;
}

.swatch {
  position: absolute;
  width: 18px;
  height: 18px;
  border: 1px solid #222;
  box-shadow: inset 0 0 0 1px #fff;
}

.swatch--fg { top: 0; left: 0; background: #7a94bb; }
.swatch--bg { top: 10px; left: 10px; background: #fff; }

.tool--mask { margin-top: 5px; }
.tool--screen { margin-top: 0; }

.doc {
  display: flex;
  flex-direction: column;
  flex: 1;
  min-width: 0;
  border-right: 2px solid #3b3b3b;
  box-sizing: border-box;
}

.tabs {
  flex: none;
  height: 30px;
  background: #424242;
}

.tab {
  display: flex;
  align-items: center;
  width: 514px;
  height: 29px;
  padding-left: 10px;
  box-sizing: border-box;
  background: #4e4e4e;
  white-space: nowrap;
}

.tab-left {
  flex: none;
  width: 221px;
  overflow: hidden;
  color: #a4a4a4;
}

.tab-right {
  margin-left: 199px;
  color: #dedede;
}

.tab-close { margin-left: 8px; }

.ruler-row {
  display: flex;
  flex: none;
  height: 17px;
  background: #4a4a4a;
}

.scroll-corner {
  flex: 1;
  background: #4f4f4f;
}

.canvas-row {
  display: flex;
  flex: 1;
  min-height: 0;
}

.ruler-h,
.ruler-v,
.ruler-corner {
  flex: none;
  display: block;
}

.ruler-v { background: #4a4a4a; }

.ruler-text {
  fill: #adadad;
  font-size: 12px;
  font-family: Roboto, sans-serif;
}

.canvas {
  flex: 1;
  min-width: 0;
  overflow: hidden;
  background: #282828;
}

.page {
  position: relative;
  width: 1381px;
  height: 655px;
  margin: 127px 0 0 89px;
  background: #fff;
}

.marquee {
  position: absolute;
  top: 175px;
  left: 548px;
}

.scroll-v {
  flex: none;
  width: 16px;
  background: #4f4f4f;
}

.status {
  display: flex;
  flex: none;
  height: 17px;
  background: #4c4c4c;
  line-height: 17px;
}

.status-zoom {
  box-sizing: border-box;
  width: 48px;
  padding-left: 4px;
  background: #474747;
  color: #ececec;
}

.status-info {
  display: flex;
  align-items: center;
  width: 184px;
  background: #474747;
  color: #c6c6c6;
}

.status-clip {
  width: 173px;
  margin-right: 3px;
  overflow: hidden;
  white-space: nowrap;
}

.status-text {
  display: inline-block;
  margin-left: -2px;
  letter-spacing: -0.400px;
}

.dock {
  display: flex;
  flex-direction: column;
  flex: none;
  width: 284px;
}

.dock-head {
  display: flex;
  align-items: center;
  justify-content: space-between;
  flex: none;
  height: 12px;
  padding: 0 7px 0 25px;
  background: #424242;
}

.dock-body {
  display: flex;
  flex: 1;
  min-height: 0;
}

.dock-strip {
  flex: none;
  width: 37px;
  border-right: 3px solid #3b3b3b;
  background: #535353;
}

.strip-cell {
  display: flex;
  flex-direction: column;
  align-items: center;
  box-sizing: border-box;
  height: 41px;
  border-bottom: 1px solid #3d3d3d;
}

.strip-cell--para {
  height: 68px;
}

.strip-a { margin-top: 0; }

.strip-a-text {
  fill: #d0d0d0;
  font-size: 16px;
  font-family: "Liberation Sans", sans-serif;
}

.strip-grip {
  width: 18px;
  height: 4px;
  margin: 3px 0 6px;
  background: repeating-linear-gradient(90deg, #6c6c6c 0 1px, transparent 1px 2px);
}

.panels {
  display: flex;
  flex-direction: column;
  flex: 1;
  min-width: 0;
}

.panel {
  position: relative;
  display: flex;
  flex-direction: column;
}

.panel--color {
  flex: none;
  height: 480px;
  border-bottom: 1px solid #3d3d3d;
}

.panel--layers {
  flex: 1;
  min-height: 0;
}

.panel-tabs {
  position: relative;
  display: flex;
  flex: none;
  height: 28px;
  background: #424242;
}

.panel-tab {
  box-sizing: border-box;
  width: 40px;
  border-right: 1px solid #363636;
  color: #949494;
  font-size: 11px;
  line-height: 28px;
  text-align: center;
}

.panel-tab--on {
  width: 39px;
  border-right: 1px solid #363636;
  background: #535353;
  color: #e8e8e8;
  font-weight: 500;
}

.panel-menu {
  position: absolute;
  top: 11px;
  right: 6px;
  width: 10px;
  height: 7px;
  background: repeating-linear-gradient(#d0d0d0 0 1px, transparent 1px 2px);
}

.color-head {
  display: flex;
  flex: none;
  padding-top: 11px;
}

.panel-swatches {
  position: relative;
  flex: none;
  width: 38px;
  margin-left: 9px;
}

.pswatch {
  position: absolute;
  width: 17px;
  height: 18px;
  border: 1px solid #1e1e1e;
  box-shadow: 0 0 0 1px #8a8a8a;
}

.pswatch--fg { top: 2px; left: 0; background: #7a94bb; box-shadow: inset 0 0 0 1px #fff, 0 0 0 1px #8a8a8a; }
.pswatch--bg { top: 12px; left: 10px; background: #fff; box-shadow: none; }

.sliders {
  display: flex;
  flex-direction: column;
  gap: 5px;
}

.slider-row {
  display: flex;
  height: 21px;
}

.slider-name {
  width: 15px;
  color: #c8c8c8;
  font-size: 12px;
  line-height: 22px;
}

.slider-track {
  position: relative;
  flex: none;
  width: 103px;
  height: 6px;
  margin: 4px 6px 0 0;
}

.track-h {
  background: linear-gradient(90deg, #f00, #ff0, #0f0, #0ff, #00f, #f0f, #f00);
}

.track-s {
  background: linear-gradient(90deg, #bababa, #0050ba);
}

.track-b {
  background: linear-gradient(90deg, #000, #a2c8ff);
}

.slider-thumb {
  position: absolute;
  top: 7px;
  width: 12px;
  height: 10px;
  margin-left: -6px;
  background: #ececec;
  clip-path: polygon(50% 0, 100% 60%, 100% 100%, 0 100%, 0 60%);
}

.slider-value {
  box-sizing: border-box;
  width: 40px;
  height: 21px;
  padding-left: 3px;
  border: 1px solid #666;
  background: #454545;
  color: #dedede;
  line-height: 19px;
}

.slider-unit {
  margin-left: 8px;
  color: #c8c8c8;
  line-height: 20px;
}

.wheel {
  position: relative;
  flex: none;
  width: 216px;
  height: 216px;
  margin: 13px 0 0 13px;
  border-radius: 50%;
  background: conic-gradient(from 90deg, #f00, #f0f, #00f, #0ff, #0f0, #ff0, #f00);
}

.wheel::before {
  content: "";
  position: absolute;
  inset: 19px;
  border-radius: 50%;
  background: #535353;
}

.wheel-tri {
  position: absolute;
  top: 0;
  left: 0;
}

.panel-add {
  position: absolute;
  right: 21px;
  bottom: 20px;
}

.layer-filter,
.layer-blend,
.layer-lock {
  display: flex;
  align-items: center;
  flex: none;
  box-sizing: border-box;
  border-bottom: 1px solid #454545;
}

.layer-filter { height: 34px; padding-top: 8px; }
.layer-blend { height: 28px; padding-top: 2px; }
.layer-lock { height: 32px; padding-bottom: 3px; border-bottom: 0; }

.field {
  position: relative;
  display: flex;
  align-items: center;
  gap: 5px;
  box-sizing: border-box;
  height: 22px;
  margin-left: 3px;
  border: 1px solid #666;
  border-radius: 3px;
  background: #454545;
  color: #e0e0e0;
}

.field--kind { width: 86px; padding-left: 8px; }
.field--blend { width: 117px; padding-left: 9px; }

.field-chev {
  position: absolute;
  top: 7px;
  right: 4px;
}

.lf-icon { margin-left: 11px; }
.field--kind + .lf-icon { margin-left: 16px; }

.lf-t {
  fill: #d6d6d6;
  font-size: 15px;
  font-weight: 700;
  font-family: "Liberation Serif", serif;
}

.lf-toggle {
  position: relative;
  width: 9px;
  height: 17px;
  margin-left: 13px;
  border: 1px solid #777;
  border-radius: 5px;
  background: #444;
}

.lf-toggle::before {
  content: "";
  position: absolute;
  top: -1px;
  left: 0;
  width: 9px;
  height: 9px;
  border-radius: 50%;
  background: #eee;
}

.lb-label {
  margin-left: 7px;
  color: #c4c4c4;
  white-space: nowrap;
}

.lb-label--opacity { margin-left: 8px; margin-right: 3px; }
.lb-label--fill { margin-left: 8px; margin-right: 3px; }

.percent {
  display: flex;
  align-items: center;
  justify-content: space-between;
  box-sizing: border-box;
  width: 55px;
  height: 19px;
  padding-left: 4px;
  border: 1px solid #666;
  border-radius: 3px;
  background: #454545;
  color: #e4e4e4;
  font-size: 11px;
}

.percent i {
  display: flex;
  align-items: center;
  justify-content: center;
  width: 15px;
  height: 100%;
  border-left: 1px solid #666;
  background: #535353;
  border-radius: 0 3px 3px 0;
}

.lock-icon { margin-left: 9px; }
.lock-icon--first { margin-left: 7px; }

.layer-row {
  display: flex;
  flex: none;
  height: 40px;
}

.layer-eye {
  display: flex;
  align-items: center;
  justify-content: center;
  flex: none;
  width: 30px;
  background: #535353;
}

.layer-item {
  display: flex;
  align-items: center;
  flex: none;
  width: 197px;
  background: #676767;
}

.layer-thumb { margin-left: 2px; }

.layer-name {
  margin-left: 8px;
  color: #e6e6e6;
  word-spacing: 3px;
}

.layer-gutter {
  flex: 1;
  background: #4f4f4f;
}

.layer-rest {
  flex: 1;
  background: #505050;
}

.layer-foot {
  display: flex;
  align-items: center;
  flex: none;
  gap: 14px;
  justify-content: flex-end;
  height: 26px;
  padding-right: 29px;
  border-top: 1px solid #3d3d3d;
  background: #505050;
}

.foot-tri {
  position: relative;
  display: flex;
}

.foot-tri::after {
  content: "";
  position: absolute;
  right: -2px;
  bottom: -4px;
  border-style: solid;
  border-width: 3px 2px 0;
  border-color: #e0e0e0 transparent transparent;
}

.foot-fx {
  fill: #dcdcdc;
  font-size: 14px;
  font-style: italic;
  font-family: "Liberation Serif", serif;
}

.gauge {
  position: absolute;
  right: 2px;
  bottom: 10px;
  box-sizing: border-box;
  width: 9px;
  height: 58px;
  padding: 0 1px;
  overflow: hidden;
  border: 1px solid #888;
  border-radius: 4px;
  background: #222;
}

.gauge-level {
  display: block;
  height: 20px;
  margin-top: 35px;
  background: repeating-linear-gradient(#55c06a 0 1px, #2b4f33 1px 2px);
}

.bottom-strip {
  flex: none;
  height: 8px;
  border-top: 1px solid #333;
  box-sizing: border-box;
  background: linear-gradient(90deg, #e6e2f2, #f0e6f3);
}

/* open menus */
.menu {
  position: absolute;
  box-sizing: border-box;
  padding: 2px;
  border: 1px solid #9e9e9e;
  background: #f0f0f0;
  box-shadow: 4px 4px 3px rgba(0, 0, 0, 0.45);
  color: #000;
}

.menu--select {
  top: 20px;
  left: 272px;
  width: 200px;
}

.menu--modify {
  top: 305px;
  left: 465px;
  width: 147px;
}

.menu-row {
  display: flex;
  justify-content: space-between;
  height: 21px;
  padding: 0 17px 0 17px;
  line-height: 22px;
  white-space: nowrap;
  word-spacing: 1.500px;
}

.menu--select .menu-row { margin-right: 4px; padding-right: 13px; }

.menu-shortcut { letter-spacing: 0.450px; }

.menu-keys { margin-left: 13px; flex: 1; }

.menu-row--off { color: #8c8c8c; }

.menu-row--on {
  background: #0078d7;
  color: #f2f2f2;
}

.menu-sep {
  height: 1px;
  margin: 5px 0;
  background: #bcbcbc;
}

.menu-caret {
  position: absolute;
  top: 293px;
  left: 185px;
  border-style: solid;
  border-width: 4.500px 0 4.500px 5px;
  border-color: transparent transparent transparent #fff;
}

.arrow {
  position: absolute;
  top: 412px;
  left: 590px;
}

.watermark {
  position: absolute;
  top: 840px;
  left: 1460px;
  pointer-events: none;
}

.wm-bai {
  font-family: "Liberation Sans", sans-serif;
  font-size: 81px;
  font-weight: 700;
  letter-spacing: -5px;
}

.wm-cjk {
  font-family: "Noto Sans CJK SC", sans-serif;
  font-size: 57px;
  font-weight: 700;
}

.wm-url {
  font-family: "Liberation Sans", sans-serif;
  font-size: 41px;
  letter-spacing: 0.700px;
  stroke: #e4e4e4;
  stroke-width: 0.5px;
}

.wm-du {
  fill: #6c6c6c;
  font-family: "Liberation Sans", sans-serif;
  font-size: 46px;
  font-weight: 700;
}
</style>
